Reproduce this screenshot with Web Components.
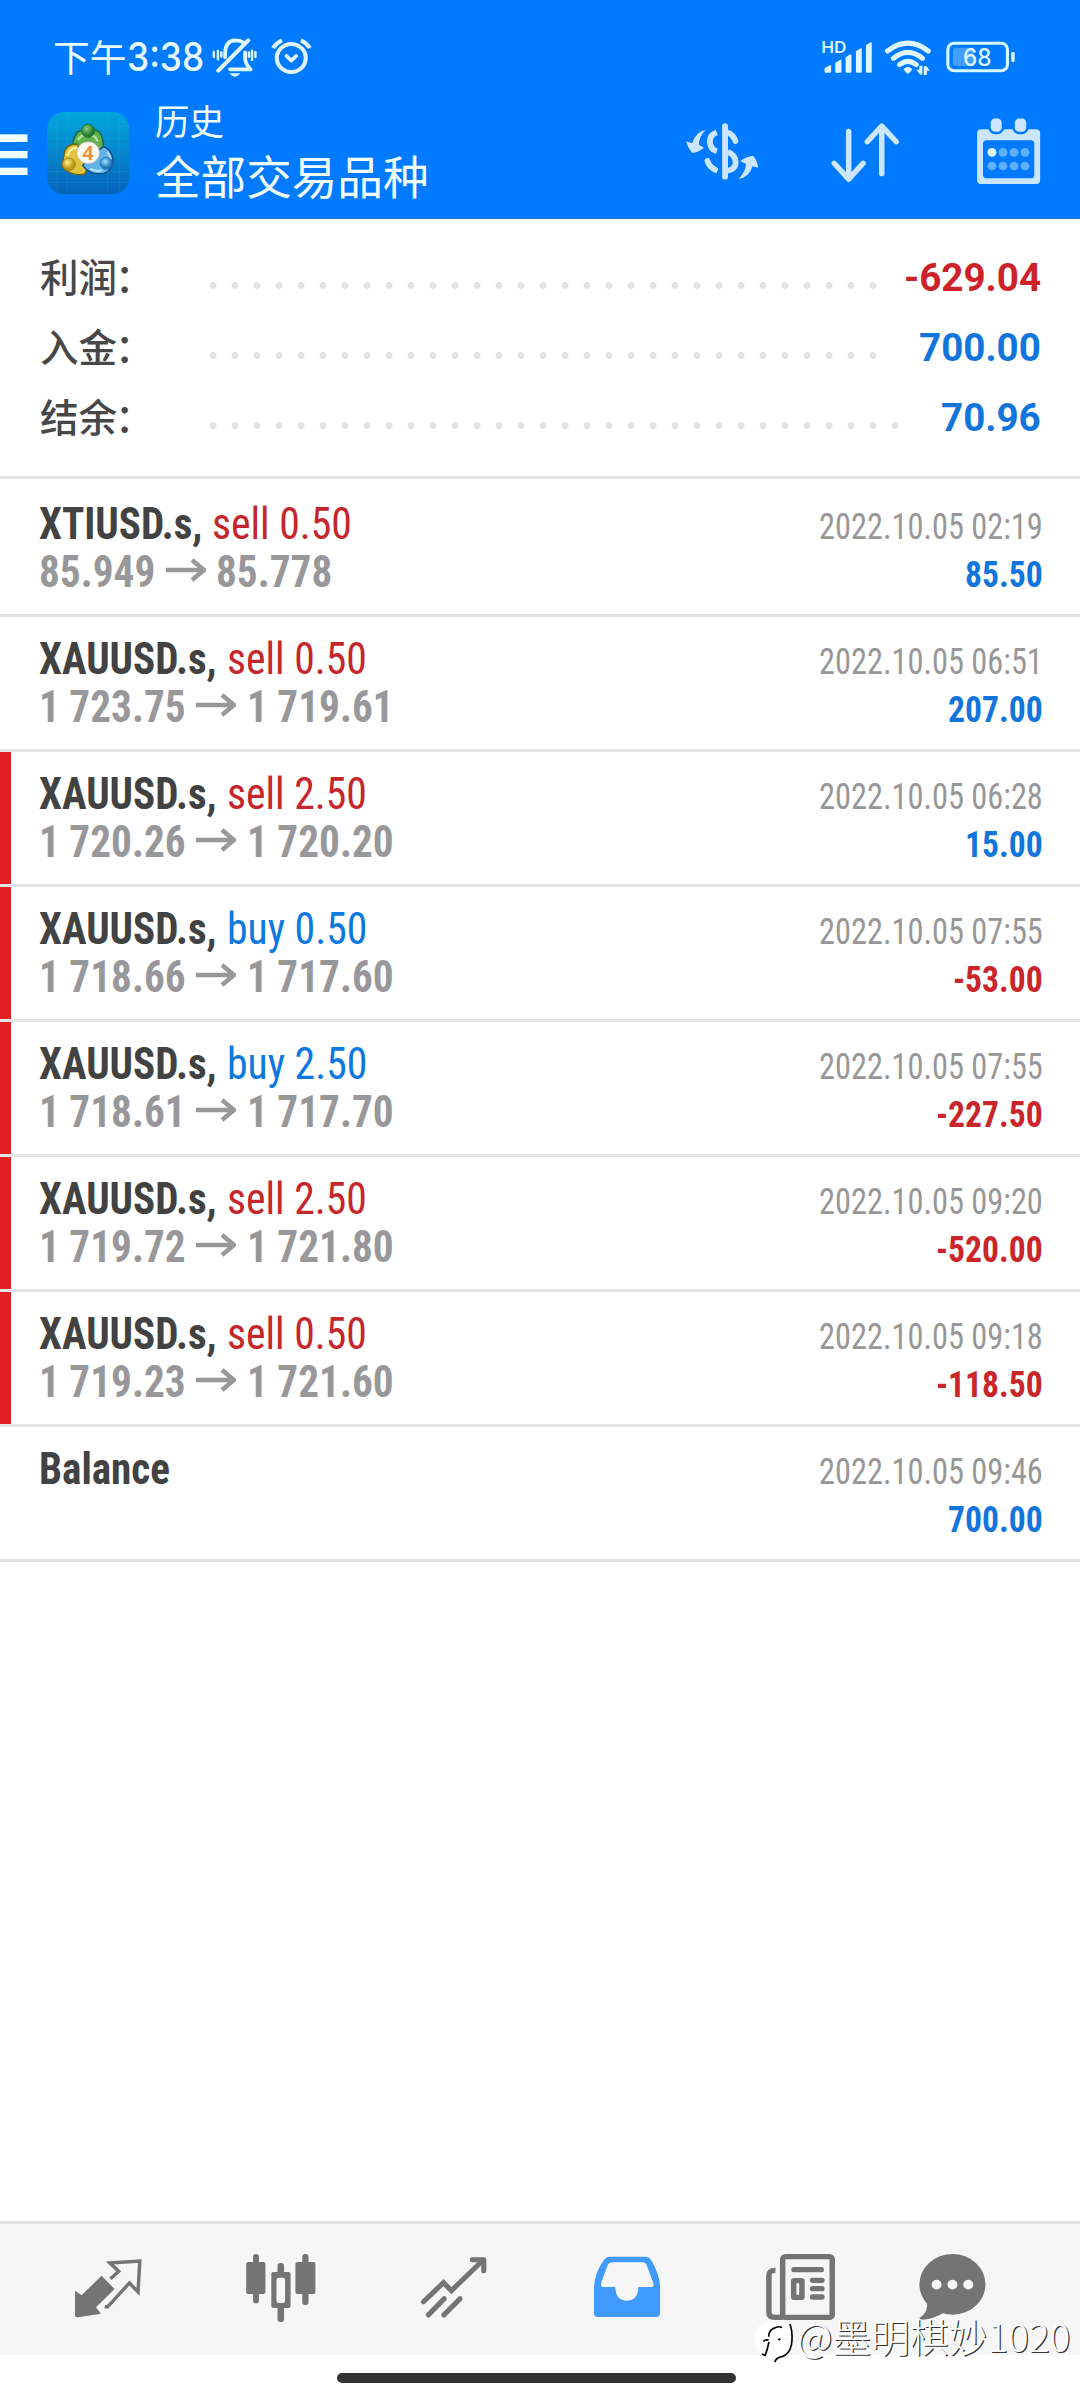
<!DOCTYPE html>
<html lang="zh">
<head>
<meta charset="utf-8">
<title>历史</title>
<style>
html,body{margin:0;padding:0;background:#fff}
body{font-family:"Roboto Condensed",Roboto,"Noto Sans CJK SC",sans-serif;width:1080px;height:2400px;overflow:hidden}
</style>
</head>
<body>
<history-app></history-app>
<script>
// Text whose horizontal scale is derived from a sample string: `sample` is drawn `w` pixels wide.
const pen = document.createElement('canvas').getContext('2d');
class FitText extends HTMLElement {
  connectedCallback() {
    if (this.shadowRoot) return;
    this.attachShadow({mode: 'open'}).innerHTML =
      '<style>:host{display:inline-block;white-space:pre;flex:none}span{display:inline-block;transform-origin:0 50%}</style><span><slot></slot></span>';
    const cs = getComputedStyle(this);
    pen.font = `${cs.fontWeight} ${cs.fontSize} ${cs.fontFamily}`;
    const text = this.textContent;
    const m = pen.measureText(this.getAttribute('sample') || text);
    const s = this.getAttribute('w') / (m.actualBoundingBoxLeft + m.actualBoundingBoxRight);
    this.shadowRoot.querySelector('span').style.transform = `scaleX(${s})`;
    this.style.width = pen.measureText(text).width * s + 'px';
  }
}
customElements.define('fit-text', FitText);

const define = (name, html) => customElements.define(name, class extends HTMLElement {
  connectedCallback() {
    if (this.shadowRoot) return;
    const a = k => this.getAttribute(k) || '';
    this.attachShadow({mode: 'open'}).innerHTML = typeof html === 'function' ? html(a) : html;
  }
});

define('status-bar', `
<style>
:host{display:flex;height:106px;color:#e6faff;align-items:flex-start}
.t{margin-left:53px;line-height:106px;height:106px;font:400 37px/106px "Noto Sans CJK SC",sans-serif;padding-top:3px;box-sizing:border-box}
.n{font:500 39px/113px Inter,sans-serif;margin-left:0}
svg{flex:none;display:block;height:106px}
.sp{flex:1}
</style>
<fit-text class="t" w="70.5">下午</fit-text>
<fit-text class="n" w="74" style="margin-left:1px">3:38</fit-text>
<svg style="margin-left:5px" width="106" viewBox="610 0 307.8 318" preserveAspectRatio="none" fill="none" stroke="#def6ff" stroke-width="11" stroke-linecap="round" stroke-linejoin="round">
<path d="M654 172V160Q654 122 683 121Q697 121 706 127"/><path d="M721 121L634 212" stroke-width="12"/><path d="M712 157V178Q714 194 728 208H668"/>
<path d="M666 220H699Q682 240 666 220Z" fill="#def6ff" stroke="none"/>
<path d="M621 156V171M633 153V178M643 157V170M723 157V170M732 152V180M742 156V171" stroke-width="7"/>
<g stroke="#dff3ff"><circle cx="846" cy="174" r="42" stroke-width="12"/><path d="M832 168L846 182L860 168" stroke-width="11"/><path d="M793 144Q803 128 819 121M874 121Q890 128 900 144" stroke-width="12" stroke-linecap="butt"/></g>
</svg>
<span class="sp"></span>
<svg width="202" style="margin-right:61px" viewBox="804 0 586.6 318" preserveAspectRatio="none" fill="#def6ff">
<text x="816" y="158" font-family="Inter" font-weight="600" font-size="48" textLength="73" lengthAdjust="spacingAndGlyphs">HD</text>
<path d="M826 205L842 195Q845 195 845 199V215Q845 218 842 218H829Q826 218 826 215ZM857 188L872 179Q875 179 875 183V215Q875 218 872 218H860Q857 218 857 215ZM887 172L901 163Q904 163 904 167V215Q904 218 901 218H890Q887 218 887 215ZM917 154L931 145Q934 145 934 149V215Q934 218 931 218H920Q917 218 917 215ZM946 136L960 127Q963 127 963 131V215Q963 218 960 218H949Q946 218 946 215Z"/>
<g fill="none" stroke="#def6ff" stroke-width="15" stroke-linecap="round"><path d="M1009 153Q1068 106 1127 153"/><path d="M1026 175Q1068 139 1110 175"/><path d="M1044 194Q1068 174 1092 194"/></g>
<path d="M1055 208Q1068 193 1081 208L1072 219Q1068 223 1064 219Z"/>
<path d="M1092 209L1101 209V197H1110V222Q1106 226 1102 222ZM1132 212L1123 212V225H1114V201Q1118 196 1122 199Z"/>
<rect x="1184" y="130" width="173" height="82" rx="18" fill="none" stroke="#d8f8ff" stroke-width="9"/>
<path d="M1207 143H1260V198H1207Q1199 198 1199 190V151Q1199 143 1207 143Z" fill="#449eff"/>
<rect x="1368" y="156" width="10" height="30" rx="4"/>
<text x="1228" y="199" font-family="Inter" font-weight="500" font-size="71" textLength="83" lengthAdjust="spacingAndGlyphs">68</text>
</svg>`);

define('title-bar', `
<style>
:host{display:flex;height:113px;align-items:flex-start;color:#f2fdff;border-bottom:1px solid #2378b4;box-sizing:border-box;height:113px}
svg{flex:none;display:block;height:112px}
.names{margin-left:26px;display:flex;flex-direction:column;font-family:"Noto Sans CJK SC",sans-serif;font-weight:400}
.a{font-size:35px;line-height:28px}.b{font-size:46px;line-height:60px;margin-top:10px}
.sp{flex:1}
</style>
<svg width="129" viewBox="0 318 374.6 336" preserveAspectRatio="none">
<defs><linearGradient id="g" x1="0" y1="0" x2="0" y2="1"><stop offset="0" stop-color="#00a6de"/><stop offset=".5" stop-color="#0685cb"/><stop offset="1" stop-color="#0463b9"/></linearGradient>
<radialGradient id="gr" cx=".4" cy=".35"><stop offset="0" stop-color="#8dcc7c"/><stop offset="1" stop-color="#247c35"/></radialGradient>
<radialGradient id="ye" cx=".4" cy=".35"><stop offset="0" stop-color="#fff08a"/><stop offset="1" stop-color="#bd9610"/></radialGradient>
<radialGradient id="bl" cx=".4" cy=".35"><stop offset="0" stop-color="#a0e1ff"/><stop offset="1" stop-color="#1e78bd"/></radialGradient></defs>
<g fill="#edffff"><rect x="-9" y="403" width="89" height="23"/><rect x="-9" y="453" width="89" height="22"/><rect x="-9" y="503" width="89" height="22"/></g>
<rect x="137" y="336" width="238" height="247" rx="50" fill="url(#g)"/>
<path d="M166 345V575M195 337V583M312 337V583M346 345V575M138 380H374M138 415H374M138 515H374M138 547H374" stroke="#55c8ec" stroke-opacity=".2" stroke-width="2"/>
<g stroke-linejoin="round" stroke-width="4">
<path d="M214 452Q206 418 226 396Q256 376 286 394Q306 416 297 460L256 470Z" fill="#5fb250" stroke="#1c633c"/>
<path d="M224 432Q190 432 186 462L180 500Q206 530 246 522L256 500Z" fill="#e0c53c" stroke="#6c6118"/>
<path d="M300 440Q322 446 328 478Q330 508 302 520Q262 528 240 496L262 470Z" fill="#5fb3e6" stroke="#0b4983"/>
</g>
<path d="M226 420Q240 398 256 408Q274 400 284 424" fill="none" stroke="#b4e29c" stroke-width="7"/>
<path d="M196 468Q202 442 224 444" fill="none" stroke="#fff2a0" stroke-width="7"/>
<path d="M312 456Q322 470 322 486M262 506Q276 516 296 511" fill="none" stroke="#b5e4ff" stroke-width="6"/>
<ellipse cx="256" cy="392" rx="19" ry="20" fill="url(#gr)" stroke="#1d6a35" stroke-width="2"/>
<circle cx="200" cy="493" r="19" fill="url(#ye)" stroke="#8d781a" stroke-width="2"/>
<circle cx="309" cy="490" r="18" fill="url(#bl)" stroke="#166aa7" stroke-width="2"/>
<circle cx="256" cy="458" r="33" fill="#fdf8f2" stroke="#b7a99a" stroke-width="2"/>
<text x="256" y="479" text-anchor="middle" font-family="Open Sans" font-weight="700" font-size="57" fill="#ef9045">4</text>
</svg>
<div class="names"><fit-text class="a" w="67">历史</fit-text><fit-text class="b" w="270.5">全部交易品种</fit-text></div>
<span class="sp"></span>
<svg width="360" style="margin-right:38px" viewBox="412 318 1045.4 336" preserveAspectRatio="none" fill="#cde6ff">
<g fill="none" stroke="#cde6ff" stroke-width="17" stroke-linecap="round"><path d="M537 378V530"/><path d="M513 397Q492 405 493 426Q494 448 513 454M545 456Q568 465 568 488Q567 508 545 512" stroke-linecap="butt"/><path d="M543 397Q561 403 567 423M486 483Q491 500 508 509"/></g>
<path d="M505 499L513 503V520L502 514ZM480 390Q452 396 441 430L424 424Q428 443 441 459Q459 457 476 443L461 434Q461 411 480 390ZM577 536Q606 534 617 499L633 503Q632 482 618 467Q597 470 581 483L598 492Q597 514 577 536Z"/>
<g fill="none" stroke="#cde6ff" stroke-width="16" stroke-linecap="round" stroke-linejoin="round"><path d="M896 394V537M854 490L896 538L938 490"/><path d="M992 521V379M950 425L992 378L1034 425"/></g>
<path fill-rule="evenodd" d="M1281 388H1440Q1452 388 1452 400V540Q1452 552 1440 552H1281Q1269 552 1269 540V400Q1269 388 1281 388ZM1297 421Q1286 421 1286 432V524Q1286 535 1297 535H1424Q1435 535 1435 524V432Q1435 421 1424 421Z"/>
<g stroke="#007aff" stroke-width="7"><rect x="1305" y="352" width="39" height="47" rx="16"/><rect x="1375" y="352" width="40" height="47" rx="16"/></g>
<circle cx="1312" cy="457" r="13" fill="#e2f5ff"/>
<g fill="#5fb0ff"><circle cx="1344" cy="457" r="13"/><circle cx="1376" cy="457" r="13"/><circle cx="1408" cy="457" r="13"/><circle cx="1312" cy="498" r="13"/><circle cx="1344" cy="498" r="13"/><circle cx="1376" cy="498" r="13"/><circle cx="1408" cy="498" r="13"/></g>
</svg>`);

define('summary-line', a => `
<style>
:host{display:flex;height:70px;align-items:center;padding:0 39px 0 40px}
.l{font:500 38.500px/64px "Noto Sans CJK SC",sans-serif;height:70px;width:162px;color:#474747;white-space:nowrap;overflow:hidden}
.l i{font-style:normal;margin-left:-2px}
.d{height:7px;width:calc(22px*${a('dots')});margin-top:15px;background:radial-gradient(circle,#e3e3e3 3.1px,transparent 3.8px) 0 0/22px 7px repeat-x}
.v{margin-left:auto;font:700 39px/72px Roboto,sans-serif;color:${a('value')[0] === '-' ? '#cd2328' : '#1275dc'}}
</style>
<span class="l">${a('label')}<i>：</i></span><span class="d"></span><fit-text class="v" sample="700.00" w="119.5">${a('value')}</fit-text>`);

define('deal-row', a => `
<style>
:host{display:flex;box-sizing:border-box;height:135px;border-bottom:3px solid #e3e3e3;background:${a('bar') ? 'linear-gradient(90deg,#e01f22 11px,#fff 11px)' : '#fff'};padding:18px 37px 0 39px;justify-content:space-between;align-items:baseline}
.c{display:flex;flex-direction:column}.r{align-items:flex-end}
.x{display:flex;height:48px;line-height:48px;font-size:44px;font-weight:700;align-items:baseline}
.n{color:#424242}.o{font-weight:400;margin-left:10px;color:${a('side') === 'buy' ? '#0c78e0' : '#c4262b'}}
.p{color:#98989a}.p svg{margin:0 10.5px;align-self:flex-start}
.t{font-size:37px;font-weight:400;line-height:48px;color:#979797}
.m{font-size:37px;font-weight:700;line-height:48px;color:${a('profit')[0] === '-' ? '#c9252a' : '#1275dc'}}
</style>
<div class="c">
<div class="x n"><fit-text sample="XAUUSD.s," w="176">${a('name')}${a('side') ? ',' : ''}</fit-text>${a('side') ? `<fit-text class="o" sample="sell 0.50" w="136.400">${a('side')} ${a('lots')}</fit-text>` : ''}</div>
${a('from') ? `<div class="x p"><fit-text sample="85.949" w="112.3">${a('from')}</fit-text><svg width="40" height="48" viewBox="0 0 40 48"><path d="M0 22H38M26 12L38 22L26 32" fill="none" stroke="#98989a" stroke-width="4.4"/></svg><fit-text sample="85.949" w="112.3">${a('to')}</fit-text></div>` : ''}
</div>
<div class="c r"><fit-text class="t" sample="2022.10.05 02:19" w="221">${a('time')}</fit-text><fit-text class="m" sample="85.50" w="75.2">${a('profit')}</fit-text></div>`);

const tab = (x, body, fill = '#747474') => `<svg width="173" height="131" viewBox="${x} 72 502.400 393" preserveAspectRatio="none" fill="${fill}">${body}</svg>`;
define('tab-bar', `
<style>
:host{display:flex;background:#f6f6f6;border-top:3px solid #e2e2e2;height:131px;padding-left:22px}
svg{display:block;flex:none}
</style>` +
tab(65, `<path d="M219 272L238 286L296 227L334 267L280 322L294 341L228 352Q219 352 219 345Z"/><path d="M322 236L346 214L320 189L407 183L402 276L377 249L313 321L305 320" fill="none" stroke="#747474" stroke-width="10"/>`) +
tab(567.4, `<rect x="716" y="186" width="56" height="96" rx="6"/><rect x="736" y="162" width="17" height="148" rx="8"/><rect x="859" y="186" width="58" height="96" rx="6"/><rect x="879" y="162" width="18" height="153" rx="8"/><rect x="807" y="189" width="19" height="60" rx="8"/><rect x="807" y="300" width="19" height="66" rx="8"/><path d="M795 216H839Q845 216 845 222V318Q845 324 839 324H795Q789 324 789 318V222Q789 216 795 216Z"/><rect x="804" y="233" width="25" height="76" rx="7" fill="#f6f6f6"/>`) +
tab(1069.8, `<g fill="none" stroke="#747474" stroke-width="15" stroke-linecap="round"><path d="M1231 305L1289 248L1312 272L1402 182" stroke-linejoin="miter"/><path d="M1373 179H1406V212" stroke-linejoin="round"/><path d="M1245 345L1291 296M1290 345L1337 296"/></g>`) +
tab(4.2, `<path fill-rule="evenodd" d="M204 170H308Q318 170 324 180Q350 225 350 262V340Q350 351 339 351H169Q158 351 158 340V262Q160 217 187 180Q194 170 204 170ZM210 187Q202 187 198 195L179 248Q176 261 186 261H220Q221 302 253 302Q286 302 287 261H323Q334 261 330 248L311 195Q308 187 300 187Z"/>`, '#419bff') +
tab(506.6, `<g fill="none" stroke="#747474" stroke-width="16"><rect x="706" y="170" width="144" height="182" rx="8"/><path d="M685 211Q666 210 666 227V336Q666 352 682 352H706"/><rect x="738" y="242" width="24" height="50" rx="2"/><path d="M739 209H818M793 241H820M793 266H820M793 291H820" stroke-linecap="round"/></g>`) +
tab(1009, `<ellipse cx="1199" cy="253" rx="96" ry="91"/><path d="M1124 305Q1132 334 1103 354Q1104 358 1112 359Q1146 356 1174 338Z"/><g fill="#f8f8f8"><circle cx="1153" cy="254" r="14.500"/><circle cx="1199" cy="254" r="14.500"/><circle cx="1245" cy="254" r="14.500"/></g>`));

define('water-mark', `
<style>
:host{display:flex;align-items:flex-start;color:#fff;font:300 39px/56px "Noto Sans CJK SC",sans-serif}
svg{display:block;margin:13px 3px 0 0}
fit-text{text-shadow:1.2px 1.2px 0 #333}
</style>
<svg width="40" height="46" viewBox="0 0 120 138" fill="none" stroke="#000" stroke-width="5">
<path d="M34 8Q60 -4 88 4Q116 20 116 60Q114 100 86 112Q74 112 62 130L46 108L26 113Q4 90 2 50Q4 18 34 8Z" fill="#fff" stroke="none"/>
<path d="M44 50Q44 28 66 22Q76 18 84 23M28 64Q34 58 44 60"/><path d="M45 66Q40 88 34 106L24 102"/><path d="M108 12Q118 40 112 76Q106 102 84 110Q68 112 62 126"/><circle cx="76" cy="58" r="3.500" fill="#000" stroke="none"/>
</svg><fit-text w="269.5">@墨明棋妙1020</fit-text>`);

define('history-app', () => {
  const deals = [
    ['XTIUSD.s', 'sell', '0.50', '85.949', '85.778', '02:19', '85.50', ''],
    ['XAUUSD.s', 'sell', '0.50', '1 723.75', '1 719.61', '06:51', '207.00', ''],
    ['XAUUSD.s', 'sell', '2.50', '1 720.26', '1 720.20', '06:28', '15.00', 1],
    ['XAUUSD.s', 'buy', '0.50', '1 718.66', '1 717.60', '07:55', '-53.00', 1],
    ['XAUUSD.s', 'buy', '2.50', '1 718.61', '1 717.70', '07:55', '-227.50', 1],
    ['XAUUSD.s', 'sell', '2.50', '1 719.72', '1 721.80', '09:20', '-520.00', 1],
    ['XAUUSD.s', 'sell', '0.50', '1 719.23', '1 721.60', '09:18', '-118.50', 1],
    ['Balance', '', '', '', '', '09:46', '700.00', '']
  ];
  return `
<style>
:host{display:flex;flex-direction:column;width:1080px;height:2400px;background:#fff;position:relative}
header{background:#007aff}
section{padding:24px 0 23px;border-bottom:3px solid #e3e3e3}
main{padding-top:3px;flex:1}
.home{height:45px;display:flex;justify-content:center;padding-right:7px}
.home i{width:399px;height:10px;border-radius:5px;background:#333;margin-top:18px}
water-mark{position:absolute;left:754px;top:2307px}
</style>
<header><status-bar></status-bar><title-bar></title-bar></header>
<section><summary-line label="利润" value="-629.04" dots="31"></summary-line><summary-line label="入金" value="700.00" dots="31"></summary-line><summary-line label="结余" value="70.96" dots="32"></summary-line></section>
<main>${deals.map(d => `<deal-row name="${d[0]}" side="${d[1]}" lots="${d[2]}" from="${d[3]}" to="${d[4]}" time="2022.10.05 ${d[5]}" profit="${d[6]}" bar="${d[7]}"></deal-row>`).join('')}</main>
<tab-bar></tab-bar>
<div class="home"><i></i></div>
<water-mark></water-mark>`;
});
</script>
</body>
</html>
